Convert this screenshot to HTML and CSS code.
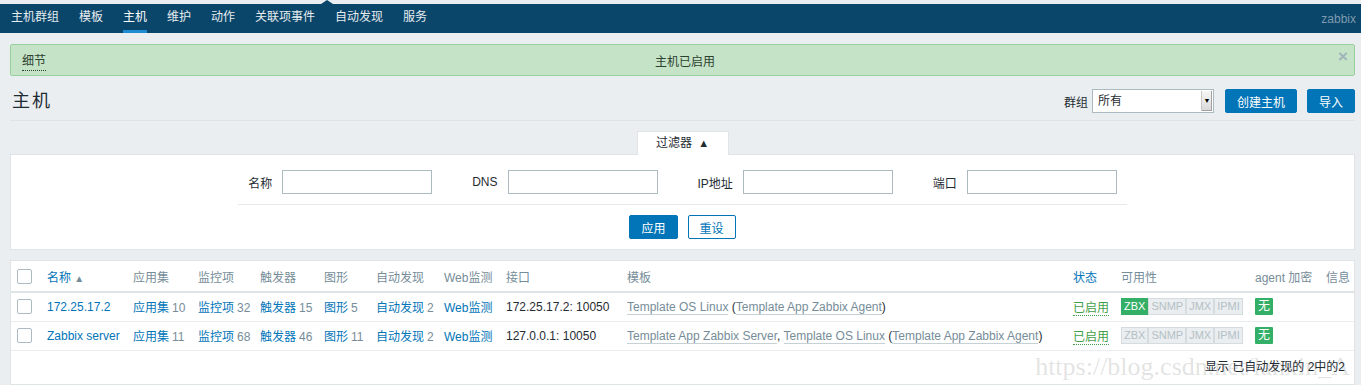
FILE: index.html
```html
<!DOCTYPE html>
<html lang="zh-CN">

<head>
  <meta charset="UTF-8" />
  <title>主机 | Zabbix</title>
  <link rel="stylesheet" href="styles.css">
</head>

<body>

  <header class="subnav">
    <ul class="subnav-list">
      <li><a href="#">主机群组</a></li>
      <li><a href="#">模板</a></li>
      <li><a href="#" class="selected">主机</a></li>
      <li><a href="#">维护</a></li>
      <li><a href="#">动作</a></li>
      <li><a href="#">关联项事件</a></li>
      <li><a href="#">自动发现</a></li>
      <li><a href="#">服务</a></li>
    </ul>
    <span class="brand">zabbix</span>
  </header>

  <main class="wrapper">

    <div class="msg-good">
      <a href="#" class="msg-details">细节</a>
      <span class="msg-text">主机已启用</span>
      <span class="msg-close">&times;</span>
    </div>

    <div class="page-header">
      <h1>主机</h1>
      <div class="header-controls">
        <label class="group-label">群组</label>
        <div class="select">
          <span>所有</span>
          <span class="select-arrow">&#9660;</span>
        </div>
        <button class="btn">创建主机</button>
        <button class="btn">导入</button>
      </div>
    </div>

    <div class="filter-tabs">
      <div class="filter-tab">过滤器 <span class="arrow-up">&#9650;</span></div>
    </div>

    <div class="filter-panel">
      <div class="filter-fields">
        <div class="field"><label>名称</label><input type="text" /></div>
        <div class="field"><label>DNS</label><input type="text" /></div>
        <div class="field"><label>IP地址</label><input type="text" /></div>
        <div class="field"><label>端口</label><input type="text" /></div>
      </div>
      <div class="filter-buttons">
        <button class="btn">应用</button>
        <button class="btn btn-alt">重设</button>
      </div>
    </div>

    <div class="list-panel">
      <table>
        <colgroup>
          <col style="width: 36px">
          <col style="width: 86px">
          <col style="width: 65px">
          <col style="width: 62px">
          <col style="width: 64px">
          <col style="width: 52px">
          <col style="width: 68px">
          <col style="width: 62px">
          <col style="width: 121px">
          <col style="width: 446px">
          <col style="width: 48px">
          <col style="width: 134px">
          <col style="width: 71px">
          <col>
        </colgroup>
        <thead>
          <tr>
            <th class="cell-cb"><input type="checkbox" class="cb" /></th>
            <th><a href="#">名称 <span class="sort">&#9650;</span></a></th>
            <th>应用集</th>
            <th>监控项</th>
            <th>触发器</th>
            <th>图形</th>
            <th>自动发现</th>
            <th>Web监测</th>
            <th>接口</th>
            <th>模板</th>
            <th><a href="#">状态</a></th>
            <th>可用性</th>
            <th>agent 加密</th>
            <th>信息</th>
          </tr>
        </thead>
        <tbody>
          <tr>
            <td class="cell-cb"><input type="checkbox" class="cb" /></td>
            <td><a href="#">172.25.17.2</a></td>
            <td><a href="#">应用集</a><span class="count">10</span></td>
            <td><a href="#">监控项</a><span class="count">32</span></td>
            <td><a href="#">触发器</a><span class="count">15</span></td>
            <td><a href="#">图形</a><span class="count">5</span></td>
            <td><a href="#">自动发现</a><span class="count">2</span></td>
            <td><a href="#">Web监测</a></td>
            <td>172.25.17.2: 10050</td>
            <td><a href="#" class="link-alt">Template OS Linux</a> (<a href="#" class="link-alt">Template App Zabbix Agent</a>)</td>
            <td><a href="#" class="status-on">已启用</a></td>
            <td>
              <span class="avail"><span class="on">ZBX</span><span>SNMP</span><span>JMX</span><span>IPMI</span></span>
            </td>
            <td><span class="enc">无</span></td>
            <td></td>
          </tr>
          <tr>
            <td class="cell-cb"><input type="checkbox" class="cb" /></td>
            <td><a href="#">Zabbix server</a></td>
            <td><a href="#">应用集</a><span class="count">11</span></td>
            <td><a href="#">监控项</a><span class="count">68</span></td>
            <td><a href="#">触发器</a><span class="count">46</span></td>
            <td><a href="#">图形</a><span class="count">11</span></td>
            <td><a href="#">自动发现</a><span class="count">2</span></td>
            <td><a href="#">Web监测</a></td>
            <td>127.0.0.1: 10050</td>
            <td><a href="#" class="link-alt">Template App Zabbix Server</a>, <a href="#" class="link-alt">Template OS Linux</a> (<a href="#" class="link-alt">Template App Zabbix Agent</a>)</td>
            <td><a href="#" class="status-on">已启用</a></td>
            <td>
              <span class="avail"><span>ZBX</span><span>SNMP</span><span>JMX</span><span>IPMI</span></span>
            </td>
            <td><span class="enc">无</span></td>
            <td></td>
          </tr>
        </tbody>
      </table>
      <div class="table-stats">显示 已自动发现的 2中的2</div>
      <div class="watermark">https://blog.csdn.net/lanxin_A</div>
    </div>

  </main>

</body>

</html>
```

FILE: styles.css
```css
* {
  box-sizing: border-box;
}

body {
  margin: 0;
  padding-top: 4px;
  background: #ebeef0;
  font-family: "Liberation Sans", Arial, "Noto Sans CJK SC", sans-serif;
  font-size: 12px;
  color: #1f2c33;
}

a {
  color: #0275b8;
  text-decoration: none;
}

/* top sub navigation */
.subnav {
  position: relative;
  display: flex;
  justify-content: space-between;
  align-items: center;
  height: 29px;
  background: #0a466a;
  padding: 0 5px 0 1px;
}

.subnav::before {
  content: "";
  position: absolute;
  left: 321px;
  top: -4px;
  border-left: 6px solid transparent;
  border-right: 6px solid transparent;
  border-bottom: 4px solid #0a466a;
}

.subnav-list {
  display: flex;
  list-style: none;
  margin: 0;
  padding: 0;
  height: 100%;
}

.subnav-list li {
  padding: 0 10px;
}

.subnav-list a {
  display: block;
  height: 29px;
  line-height: 26px;
  color: #e6ecf0;
  border-bottom: 3px solid transparent;
}

.subnav-list a.selected {
  color: #fff;
  border-bottom-color: #1f8bd3;
}

.brand {
  color: #7e9aae;
}

.wrapper {
  padding: 0 6px 0 10px;
}

/* message */
.msg-good {
  margin-top: 11px;
  height: 32px;
  display: grid;
  grid-template-columns: 1fr auto 1fr;
  align-items: center;
  background: #c5e3c7;
  border: 1px solid #98d09c;
  border-radius: 2px;
  padding: 0 6px 0 11px;
  color: #2c4230;
}

.msg-details {
  justify-self: start;
  color: #2c4230;
  line-height: 14px;
  padding-bottom: 2px;
  margin-top: 4px;
  border-bottom: 1px dotted #2c4230;
}

.msg-close {
  justify-self: end;
  align-self: start;
  margin-top: 3px;
  font-size: 17px;
  line-height: 17px;
  font-weight: bold;
  color: #9fb3b9;
}

/* page header */
.page-header {
  display: flex;
  justify-content: space-between;
  align-items: center;
  margin-top: 13px;
  padding-bottom: 7px;
  border-bottom: 1px solid #dde3e6;
}

h1 {
  margin: 0 0 0 2px;
  font-size: 18px;
  font-weight: normal;
  line-height: 24px;
  letter-spacing: 2px;
}

.header-controls {
  display: flex;
  align-items: center;
}

.group-label {
  margin-right: 4px;
}

.select {
  display: flex;
  justify-content: space-between;
  align-items: stretch;
  width: 122px;
  height: 24px;
  border: 1px solid #acbbc2;
  background: #fff;
  padding: 1px 1px 1px 5px;
  line-height: 20px;
  margin-right: 11px;
}

.select-arrow {
  width: 11px;
  font-size: 7px;
  text-align: center;
  color: #000;
  background: linear-gradient(#f6f6f6, #d9d9d9);
  border-left: 1px solid #c8c8c8;
  box-shadow: inset -1px -1px 0 #a0a0a0;
}

.btn {
  height: 24px;
  padding: 0 11px;
  background: #0275b8;
  border: 1px solid #0275b8;
  border-radius: 2px;
  color: #fff;
  font: inherit;
  cursor: pointer;
}

.header-controls .btn + .btn {
  margin-left: 10px;
}

.btn-alt {
  background: #fff;
  color: #0275b8;
}

/* filter */
.filter-tabs {
  display: flex;
  justify-content: center;
  margin-top: 10px;
}

.filter-tab {
  position: relative;
  z-index: 1;
  width: 92px;
  height: 24px;
  margin-bottom: -1px;
  background: #fff;
  border: 1px solid #dfe4e7;
  border-bottom: 0;
  text-align: center;
  line-height: 23px;
}

.arrow-up {
  font-size: 11px;
  margin-left: 3px;
}

.filter-panel {
  background: #fff;
  border: 1px solid #dfe4e7;
  padding: 15px 0 10px;
}

.filter-fields {
  width: 889px;
  margin: 0 auto;
  display: flex;
  justify-content: center;
  gap: 40px;
  padding-bottom: 10px;
  border-bottom: 1px solid #e6eaec;
}

.field {
  display: flex;
  align-items: center;
  gap: 10px;
}

.field input {
  width: 150px;
  height: 24px;
  border: 1px solid #acbbc2;
  border-radius: 0;
  background: #fff;
  margin: 0;
}

.filter-buttons {
  display: flex;
  justify-content: center;
  gap: 10px;
  margin-top: 10px;
}

/* host list */
.list-panel {
  position: relative;
  margin-top: 10px;
  background: #fff;
  border: 1px solid #dfe4e7;
}

table {
  width: 100%;
  border-collapse: collapse;
  table-layout: fixed;
}

th,
td {
  padding: 0;
  text-align: left;
  white-space: nowrap;
  overflow: hidden;
}

th {
  height: 31px;
  font-weight: normal;
  color: #768d99;
  border-bottom: 2px solid #dfe4e7;
}

td {
  height: 29px;
  border-bottom: 1px solid #ebeef0;
}

.cell-cb {
  padding-left: 6px;
}

.cb {
  appearance: none;
  display: block;
  width: 15px;
  height: 15px;
  margin: 0;
  border: 1px solid #acbbc2;
  border-radius: 2px;
  background: #fff;
}

.sort {
  font-size: 10px;
  color: #768d99;
}

.count {
  margin-left: 3px;
  color: #768d99;
}

.link-alt {
  color: #768d99;
  border-bottom: 1px solid #c6d1d6;
}

.status-on {
  color: #429e47;
  border-bottom: 1px dotted #429e47;
}

.avail {
  display: inline-flex;
  vertical-align: middle;
}

.avail span {
  height: 17px;
  line-height: 15px;
  padding: 0 2px;
  font-size: 11px;
  background: #ebeef0;
  border: 1px solid #d5dce0;
  color: #b3c0c6;
}

.avail span.on {
  background: #34af67;
  border-color: #34af67;
  color: #fff;
}

.enc {
  display: inline-block;
  vertical-align: middle;
  height: 17px;
  line-height: 17px;
  padding: 0 3px;
  background: #34af67;
  color: #fff;
  border-radius: 1px;
}

.table-stats {
  position: relative;
  z-index: 1;
  height: 33px;
  line-height: 33px;
  padding-right: 9px;
  text-align: right;
}

.watermark {
  position: absolute;
  right: 4px;
  bottom: 4px;
  font-family: "Liberation Serif", serif;
  font-size: 26px;
  line-height: 26px;
  color: rgba(110, 110, 110, 0.2);
  pointer-events: none;
}
```
